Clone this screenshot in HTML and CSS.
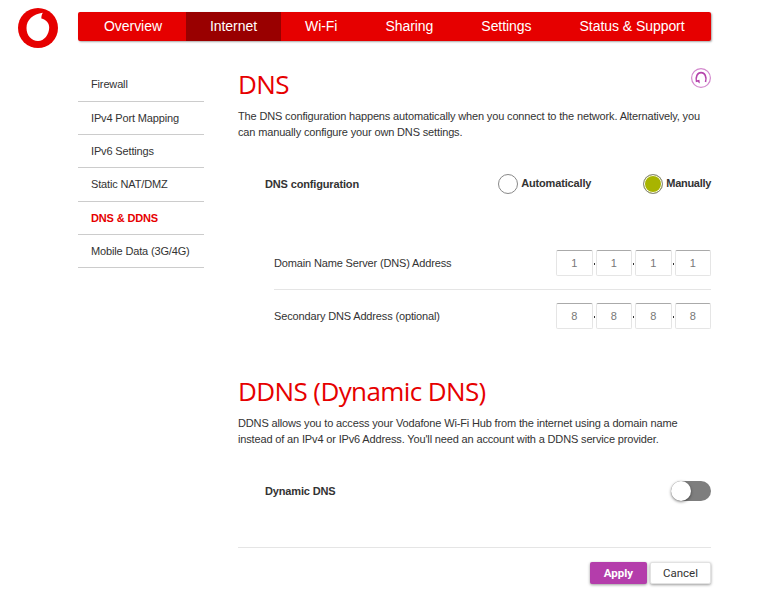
FILE: index.html
```html
<!DOCTYPE html>
<html lang="en">
<head>
  <meta charset="UTF-8">
  <title>DNS - Vodafone Wi-Fi Hub</title>
  <link rel="stylesheet" href="styles.css">
</head>
<body>
  <header class="top-bar">
    <svg class="logo" viewBox="0 0 40 40" aria-label="Vodafone">
      <circle cx="20" cy="20" r="20" fill="#e60000"/>
      <path d="M20 33c-6.500 0-11.500-5.500-11.500-13C8.500 12 15 6 24.800 4.800c-.9 1.600-1.600 3.700-1.400 5.700 4.800 1.200 7.800 4.500 7.800 9 0 7-5 13.500-11.200 13.500z" fill="#fff"/>
    </svg>
    <nav class="main-nav">
      <a href="#">Overview</a>
      <a href="#" class="active">Internet</a>
      <a href="#">Wi-Fi</a>
      <a href="#">Sharing</a>
      <a href="#">Settings</a>
      <a href="#">Status &amp; Support</a>
    </nav>
  </header>

  <div class="page">
    <ul class="side-nav">
      <li><a href="#">Firewall</a></li>
      <li><a href="#">IPv4 Port Mapping</a></li>
      <li><a href="#">IPv6 Settings</a></li>
      <li><a href="#">Static NAT/DMZ</a></li>
      <li><a href="#" class="current">DNS &amp; DDNS</a></li>
      <li><a href="#">Mobile Data (3G/4G)</a></li>
    </ul>

    <main class="content">
      <div class="title-row">
        <h1>DNS</h1>
        <svg class="help-icon" viewBox="0 0 20 20">
          <circle cx="10" cy="10" r="9.400" fill="none" stroke="#d388cd" stroke-width="1.200"/>
          <path d="M5.600 14c-1.500-5.200.9-9.400 4.500-9.400s6 4.200 4.400 9.400" fill="none" stroke="#b543ac" stroke-width="1.600"/>
          <path d="M4.800 12.400l3.600-.6.500 3.800z" fill="#b543ac"/>
        </svg>
      </div>
      <p class="intro">The DNS configuration happens automatically when you connect to the network. Alternatively, you can manually configure your own DNS settings.</p>

      <div class="config-row">
        <span class="config-label">DNS configuration</span>
        <div class="radio-group">
          <label class="radio"><span class="radio-dot"></span>Automatically</label>
          <label class="radio checked"><span class="radio-dot"></span>Manually</label>
        </div>
      </div>

      <div class="address-rows">
        <div class="address-row">
          <span>Domain Name Server (DNS) Address</span>
          <div class="ip-fields">
            <span class="octet">1</span><i></i><span class="octet">1</span><i></i><span class="octet">1</span><i></i><span class="octet">1</span>
          </div>
        </div>
        <div class="address-row">
          <span>Secondary DNS Address (optional)</span>
          <div class="ip-fields">
            <span class="octet">8</span><i></i><span class="octet">8</span><i></i><span class="octet">8</span><i></i><span class="octet">8</span>
          </div>
        </div>
      </div>

      <h1 class="second-title">DDNS (Dynamic DNS)</h1>
      <p class="intro">DDNS allows you to access your Vodafone Wi-Fi Hub from the internet using a domain name instead of an IPv4 or IPv6 Address. You'll need an account with a DDNS service provider.</p>

      <div class="config-row ddns-row">
        <span class="config-label">Dynamic DNS</span>
        <span class="toggle"></span>
      </div>

      <div class="actions">
        <button class="btn-apply" type="button">Apply</button>
        <button class="btn-cancel" type="button">Cancel</button>
      </div>
    </main>
  </div>
</body>
</html>
```

FILE: styles.css
```css
* {
  box-sizing: border-box;
  margin: 0;
  padding: 0;
}

body {
  font-family: "Liberation Sans", Arial, sans-serif;
  background-color: #fff;
  color: #333;
  font-size: 11px;
  letter-spacing: -0.15px;
}

a {
  text-decoration: none;
  color: inherit;
}

.top-bar {
  display: flex;
  align-items: flex-start;
  padding: 8px 56px 0 18px;
}

.logo {
  width: 40px;
  height: 40px;
  margin-right: 20px;
}

.main-nav {
  display: flex;
  flex: 1;
  height: 29px;
  margin-top: 4px;
  background-color: #e60000;
  border-radius: 2px;
  box-shadow: 1px 1px 2px rgba(0, 0, 0, 0.35);
}

.main-nav a {
  padding: 0 24px;
  color: #fff;
  font-size: 14px;
  letter-spacing: -0.05px;
  line-height: 29px;
}

.main-nav a.active {
  background-color: #990000;
}

.main-nav a:first-child {
  padding-left: 26px;
}

.page {
  display: flex;
  padding: 21px 56px 19px 78px;
}

.side-nav {
  flex: none;
  width: 126px;
  margin-top: -0.500px;
  margin-right: 34px;
  list-style: none;
}

.side-nav li {
  height: 33.300px;
  border-bottom: 1px solid #ccc;
}

.side-nav a {
  display: block;
  padding-left: 13px;
  line-height: 32px;
}

.side-nav li:first-child a {
  line-height: 30px;
}

.side-nav a.current {
  color: #e60000;
  font-weight: bold;
}

.content {
  flex: 1;
  min-width: 0;
  margin-top: -1px;
}

.title-row {
  display: flex;
  justify-content: space-between;
  align-items: flex-start;
}

h1 {
  font-family: "Open Sans", sans-serif;
  font-size: 26px;
  font-weight: 400;
  letter-spacing: -0.600px;
  line-height: 32px;
  color: #e60000;
}

.help-icon {
  width: 20px;
  height: 20px;
}

.intro {
  margin-top: 8px;
  line-height: 16px;
}

.config-row {
  display: flex;
  justify-content: space-between;
  align-items: center;
  margin-top: 34px;
  padding-left: 27px;
}

.config-label {
  font-weight: bold;
}

.radio-group {
  display: flex;
  gap: 52px;
  margin-top: -2px;
}

.radio {
  display: flex;
  align-items: center;
  gap: 3px;
  font-weight: bold;
}

.radio.checked {
  letter-spacing: -0.300px;
}

.radio-dot {
  width: 20px;
  height: 20px;
  margin-top: 2px;
  border: 1px solid #888;
  border-radius: 50%;
}

.radio.checked .radio-dot {
  background-color: #a8b400;
  box-shadow: inset 0 0 0 1px #fff;
}

.address-rows {
  margin-top: 43px;
  padding-left: 36px;
}

.address-row {
  display: flex;
  justify-content: space-between;
  align-items: center;
  height: 52px;
}

.address-row + .address-row {
  height: 53px;
  border-top: 1px solid #e5e5e5;
}

.ip-fields {
  display: flex;
  align-items: center;
}

.ip-fields i {
  width: 1px;
  height: 2px;
  margin: 2px 1px 0;
  background-color: #333;
}

.octet {
  width: 36.500px;
  height: 26px;
  border: 1px solid #e5e5e5;
  border-top-color: #aaa;
  border-radius: 2px;
  color: #777;
  text-align: center;
  line-height: 25px;
}

.second-title {
  margin-top: 33px;
}

.ddns-row {
  margin-top: 34px;
}

.toggle {
  position: relative;
  width: 40px;
  height: 20px;
  background-color: #7e7e7e;
  border-radius: 10px;
}

.toggle::after {
  content: "";
  position: absolute;
  left: 0;
  top: 0;
  width: 20px;
  height: 20px;
  background-color: #fff;
  border-radius: 50%;
  box-shadow: 0 1px 3px rgba(0, 0, 0, 0.5);
}

.actions {
  display: flex;
  justify-content: flex-end;
  gap: 3px;
  margin-top: 46px;
  padding-top: 14px;
  border-top: 1px solid #e5e5e5;
}

.actions button {
  width: 57px;
  height: 22px;
  border: none;
  border-radius: 2px;
  font-family: Roboto, sans-serif;
  font-size: 11.500px;
  box-shadow: 0 1px 3px rgba(0, 0, 0, 0.4);
}

.btn-apply {
  background-color: #b43dab;
  color: #fff;
  font-weight: bold;
}

.actions .btn-cancel {
  width: 61px;
  background-color: #fff;
  border: 1px solid #e2e2e2;
  color: #333;
}
```
